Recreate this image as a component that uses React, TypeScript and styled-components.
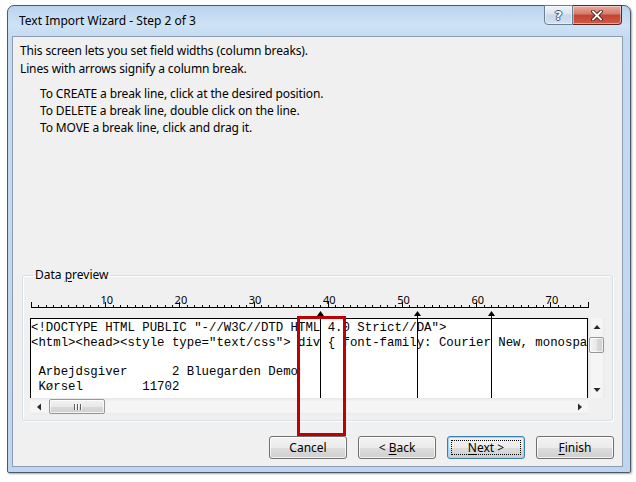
import React from 'react'
import styled, { createGlobalStyle } from 'styled-components'

const CW = 7.42
const COLS = 75
const BREAKS = [39, 52, 62]

const GlobalStyle = createGlobalStyle`
  html, body {
    margin: 0;
    padding: 0;
    background: #ffffff;
  }
  body {
    font-family: 'Noto Sans', 'Open Sans', sans-serif;
    font-size: 12px;
    color: #000000;
  }
`

const Page = styled.div`
  position: relative;
  width: 636px;
  height: 482px;
  padding: 5px 0 0 7px;
  box-sizing: border-box;
  overflow: hidden;
`

const Window = styled.div`
  width: 624px;
  height: 468px;
  box-sizing: border-box;
  display: flex;
  flex-direction: column;
  border: 1px solid #4e5966;
  border-radius: 7px 7px 2px 2px;
  padding: 0 7px 5px 4px;
  background: linear-gradient(
    180deg,
    #b9d3ee 0%,
    #cfe2f5 4%,
    #c3daf1 7%,
    #bed6ef 100%
  );
  box-shadow: 1px 1px 2px rgba(0, 0, 0, 0.35);
`

const TitleBar = styled.div`
  height: 30px;
  display: flex;
  justify-content: space-between;
  align-items: flex-start;
`

const Title = styled.div`
  padding-left: 7px;
  line-height: 30px;
  font-size: 12px;
  color: #000000;
`

const CaptionButtons = styled.div`
  display: flex;
  margin-top: -1px;
  margin-right: 1px;
`

const CaptionButton = styled.div<{ $close?: boolean }>`
  width: ${(p) => (p.$close ? 49 : 29)}px;
  height: 20px;
  box-sizing: border-box;
  display: flex;
  align-items: center;
  justify-content: center;
  border: 1px solid ${(p) => (p.$close ? '#5a2620' : '#6d7e93')};
  border-left-width: ${(p) => (p.$close ? 0 : 1)}px;
  border-radius: ${(p) => (p.$close ? '0 0 4px 0' : '0 0 0 4px')};
  background: ${(p) =>
    p.$close
      ? 'linear-gradient(180deg, #e9a99b 0%, #d47b6b 45%, #c24433 50%, #cf5a47 100%)'
      : 'linear-gradient(180deg, #eef4fa 0%, #d9e5f2 45%, #c6d7eb 50%, #d3e2f2 100%)'};
  box-shadow: inset 0 0 0 1px rgba(255, 255, 255, 0.45);
`

const HelpGlyph = styled.span`
  font-family: 'DejaVu Sans', sans-serif;
  font-weight: bold;
  font-size: 13px;
  line-height: 1;
  color: #f4f7fb;
  text-shadow: -1px 0 #46566b, 1px 0 #46566b, 0 -1px #46566b, 0 1px #46566b;
`

const Client = styled.div`
  flex: 1;
  display: flex;
  flex-direction: column;
  border: 1px solid #8c9db2;
  background: #f0f0f0;
  padding: 5px 7px 7px 7px;
`

const Intro = styled.div`
  line-height: 18px;
  letter-spacing: -0.13px;
`

const Line = styled.div`
  white-space: nowrap;
`

const Instructions = styled.div`
  margin-top: 7px;
  padding-left: 20px;
  line-height: 17px;
  letter-spacing: -0.12px;
`

const Spacer = styled.div`
  flex: 1;
`

const GroupBox = styled.fieldset`
  margin: 0 2px;
  padding: 11px 7px 5px 7px;
  border: 1px solid #d5dfe5;
  border-radius: 3px;
  box-shadow: inset 1px 1px 0 #ffffff, 1px 1px 0 #ffffff;
  min-width: 0;
`

const Legend = styled.legend`
  margin-left: 3px;
  padding: 0 2px;
  line-height: 16px;
  font-size: 12px;
`

const Key = styled.span`
  text-decoration: underline;
  text-underline-offset: 2px;
`

const PreviewArea = styled.div`
  position: relative;
  width: 575px;
  display: grid;
  grid-template-columns: 558px 17px;
  grid-template-rows: 24px 80px 17px;
`

const Ruler = styled.svg`
  grid-column: 1 / 3;
  display: block;
  overflow: visible;
`

const TextPane = styled.div`
  box-sizing: border-box;
  border: 1px solid #000000;
  border-bottom: none;
  background: #ffffff;
  overflow: hidden;
  padding-top: 2px;
  font-family: 'Liberation Mono', 'Courier New', monospace;
  font-size: 12.36px;
  line-height: 14.8px;
  white-space: pre;
`

const BreakLine = styled.div`
  position: absolute;
  top: 18px;
  width: 1px;
  height: 86px;
  background: #000000;
`

const ScrollTrack = styled.div<{ $vertical?: boolean }>`
  display: flex;
  flex-direction: ${(p) => (p.$vertical ? 'column' : 'row')};
  align-items: center;
  background: ${(p) =>
    p.$vertical
      ? 'linear-gradient(90deg, #e6e6e6 0%, #f5f5f5 20%, #f5f5f5 80%, #e9e9e9 100%)'
      : 'linear-gradient(180deg, #e6e6e6 0%, #f5f5f5 20%, #f5f5f5 80%, #e9e9e9 100%)'};
`

const ArrowCell = styled.div`
  width: 17px;
  height: 17px;
  display: flex;
  align-items: center;
  justify-content: center;
  flex-shrink: 0;
`

const ScrollThumb = styled.div<{ $vertical?: boolean; $start: number; $size: number }>`
  box-sizing: border-box;
  ${(p) =>
    p.$vertical
      ? `width: 15px; height: ${p.$size}px; margin-top: ${p.$start}px;`
      : `height: 15px; width: ${p.$size}px; margin-left: ${p.$start}px;`}
  border: 1px solid #979797;
  border-radius: 2px;
  background: ${(p) =>
    p.$vertical
      ? 'linear-gradient(90deg, #f3f3f3 0%, #e8e8e8 50%, #d9d9d9 51%, #d0d0d0 100%)'
      : 'linear-gradient(180deg, #f3f3f3 0%, #e8e8e8 50%, #d9d9d9 51%, #d0d0d0 100%)'};
  box-shadow: inset 0 0 0 1px rgba(255, 255, 255, 0.7);
  display: flex;
  align-items: center;
  justify-content: center;
  gap: 2px;
`

const Grip = styled.div`
  width: 1px;
  height: 6px;
  background: #5b5b5b;
  box-shadow: 1px 0 0 #ffffff;
`

const Filler = styled.div`
  flex: 1;
`

const Corner = styled.div`
  background: #f0f0f0;
`

const ButtonRow = styled.div`
  display: flex;
  justify-content: flex-end;
  gap: 11px;
  margin-top: 15px;
  padding-right: 1px;
`

const Button = styled.div<{ $default?: boolean }>`
  position: relative;
  width: 78px;
  height: 23px;
  box-sizing: border-box;
  display: flex;
  align-items: center;
  justify-content: center;
  white-space: pre;
  border: 1px solid ${(p) => (p.$default ? '#3c7fb1' : '#707070')};
  border-radius: 3px;
  background: linear-gradient(180deg, #f2f2f2 0%, #ebebeb 50%, #dddddd 51%, #cfcfcf 100%);
  box-shadow: inset 0 0 0 1px
    ${(p) => (p.$default ? '#94d9fb' : 'rgba(255, 255, 255, 0.75)')};
  font-size: 12px;
`

const FocusRing = styled.span`
  position: absolute;
  inset: 3px;
  border: 1px dotted #000000;
`

const Highlight = styled.div`
  position: absolute;
  left: 297px;
  top: 316px;
  width: 49px;
  height: 120px;
  box-sizing: border-box;
  border: 3px solid #c00000;
`

// the pane is 75 columns wide, so line 2 stops where the reference clips it
const PREVIEW_LINES = [
  '<!DOCTYPE HTML PUBLIC "-//W3C//DTD HTML 4.0 Strict//DA">',
  '<html><head><style type="text/css"> div { font-family: Courier New, monospa',
  '',
  ' Arbejdsgiver      2 Bluegarden Demo',
  ' Kørsel        11702',
]

const colX = (n: number) => 1 + n * CW

const RulerDrawing: React.FC = () => {
  const ticks = Array.from({ length: COLS + 1 }, (_, n) => n)
  return (
    <Ruler width={575} height={24}>
      <line x1={1} x2={colX(COLS) + 1} y1={13.5} y2={13.5} stroke="#000" strokeWidth={1} />
      {ticks.map((n) => {
        const x = Math.round(colX(n)) + 0.5
        const h = n % 10 === 0 || n === COLS ? 5 : 2
        return <line key={n} x1={x} x2={x} y1={14} y2={13 - h} stroke="#000" strokeWidth={1} />
      })}
      {[10, 20, 30, 40, 50, 60, 70].map((n) => (
        <text
          key={n}
          x={colX(n) + 1.5}
          y={9.5}
          textAnchor="middle"
          fontFamily="'Noto Sans', sans-serif"
          fontSize={11}
          fill="#000"
        >
          {n}
        </text>
      ))}
      {BREAKS.map((n) => {
        const x = Math.round(colX(n)) + 0.5
        return <polygon key={n} points={`${x - 3.5},22 ${x + 3.5},22 ${x},17`} fill="#000" />
      })}
    </Ruler>
  )
}

const Arrow: React.FC<{ dir: 'up' | 'down' | 'left' | 'right' }> = ({ dir }) => {
  const pts = {
    up: '0.5,4 7.5,4 4,0',
    down: '0.5,0 7.5,0 4,4',
    left: '4,0.5 4,7.5 0,4',
    right: '0,0.5 0,7.5 4,4',
  }[dir]
  const vertical = dir === 'up' || dir === 'down'
  return (
    <svg width={vertical ? 8 : 4} height={vertical ? 4 : 8}>
      <polygon points={pts} fill="#2b2b2b" />
    </svg>
  )
}

const App: React.FC = () => {
  return (
    <Page>
      <GlobalStyle />
      <Window>
        <TitleBar>
          <Title>Text Import Wizard - Step 2 of 3</Title>
          <CaptionButtons>
            <CaptionButton>
              <HelpGlyph>?</HelpGlyph>
            </CaptionButton>
            <CaptionButton $close>
              <svg width={12} height={11} viewBox="0 0 12 11">
                <path d="M2 1.5 L10 9.5 M10 1.5 L2 9.5" stroke="#4a1a14" strokeWidth={3.6} strokeLinecap="square" />
                <path d="M2 1.5 L10 9.5 M10 1.5 L2 9.5" stroke="#ffffff" strokeWidth={1.8} strokeLinecap="square" />
              </svg>
            </CaptionButton>
          </CaptionButtons>
        </TitleBar>

        <Client>
          <Intro>
            <Line>This screen lets you set field widths (column breaks).</Line>
            <Line>Lines with arrows signify a column break.</Line>
          </Intro>
          <Instructions>
            <Line>To CREATE a break line, click at the desired position.</Line>
            <Line>To DELETE a break line, double click on the line.</Line>
            <Line>To MOVE a break line, click and drag it.</Line>
          </Instructions>
          <Spacer />

          <GroupBox>
            <Legend>
              Data <Key>p</Key>review
            </Legend>
            <PreviewArea>
              <RulerDrawing />
              <TextPane>
                {PREVIEW_LINES.map((l, i) => (
                  <div key={i}>{l || ' '}</div>
                ))}
              </TextPane>
              <ScrollTrack $vertical>
                <ArrowCell>
                  <Arrow dir="up" />
                </ArrowCell>
                <ScrollThumb $vertical $start={2} $size={16} />
                <Filler />
                <ArrowCell>
                  <Arrow dir="down" />
                </ArrowCell>
              </ScrollTrack>
              <ScrollTrack>
                <ArrowCell>
                  <Arrow dir="left" />
                </ArrowCell>
                <ScrollThumb $start={2} $size={56}>
                  <Grip />
                  <Grip />
                  <Grip />
                </ScrollThumb>
                <Filler />
                <ArrowCell>
                  <Arrow dir="right" />
                </ArrowCell>
              </ScrollTrack>
              <Corner />
              {BREAKS.map((n) => (
                <BreakLine key={n} style={{ left: Math.round(colX(n)) }} />
              ))}
            </PreviewArea>
          </GroupBox>

          <ButtonRow>
            <Button>Cancel</Button>
            <Button>
              {'< '}
              <Key>B</Key>ack
            </Button>
            <Button $default>
              <FocusRing />
              <Key>N</Key>
              {'ext >'}
            </Button>
            <Button>
              <Key>F</Key>inish
            </Button>
          </ButtonRow>
        </Client>
      </Window>
      <Highlight />
    </Page>
  )
}

export default App
